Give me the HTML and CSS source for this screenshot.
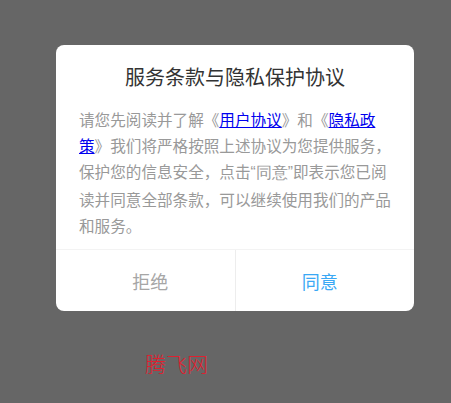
FILE: index.html
```html
<!DOCTYPE html>
<html lang="zh">
<head>
<meta charset="utf-8">
<link rel="stylesheet" href="styles.css">
</head>
<body>
<div class="dialog">
  <div class="title">服务条款与隐私保护协议</div>
  <div class="content">请您先阅读并了解《<a href="#">用户协议</a>》和《<a href="#">隐私政策</a>》我们将严格按照上述协议为您提供服务，保护您的信息安全，点击<span class="q">“同意”</span>即表示您已阅读并同意全部条款，可以继续使用我们的产品和服务。</div>
  <div class="actions">
    <div class="btn btn-reject">拒绝</div>
    <div class="btn btn-agree">同意</div>
  </div>
</div>
<div class="mark">腾飞网</div>
</body>
</html>
```

FILE: styles.css
```css
html, body {
  margin: 0;
  padding: 0;
  background: #666666;
  height: 100%;
}
body {
  font-family: "Noto Sans CJK SC", "Noto Sans", sans-serif;
  padding-top: 45px;
  box-sizing: border-box;
}
.dialog {
  margin-left: 56px;
  width: 358px;
  height: 266px;
  background: #ffffff;
  border-radius: 8px;
  display: flex;
  flex-direction: column;
  overflow: hidden;
}
.title {
  padding-top: 18px;
  font-size: 20px;
  line-height: 28px;
  color: #333333;
  text-align: center;
}
.content {
  margin-top: 15px;
  padding: 0 22px 0 23px;
  font-size: 15.6px;
  line-height: 26px;
  color: #999999;
  flex: 1;
}
.content .q {
  font-family: "Liberation Sans", sans-serif;
}
.content a {
  color: #0000ee;
  text-decoration: underline;
}
.actions {
  display: flex;
  height: 61px;
  border-top: 1px solid #f3f3f3;
}
.btn {
  flex: 1;
  display: flex;
  align-items: center;
  justify-content: center;
  font-size: 18px;
}
.btn-reject {
  color: #a6a6a6;
  border-right: 1px solid #ededed;
  padding-left: 10px;
}
.btn-agree {
  color: #3aa8f5;
  padding-right: 10px;
}
.mark {
  margin-top: 39px;
  margin-left: 145px;
  font-family: "Noto Sans CJK SC", serif;
  font-weight: 300;
  font-size: 21px;
  line-height: 26px;
  color: #e0202f;
}
```
